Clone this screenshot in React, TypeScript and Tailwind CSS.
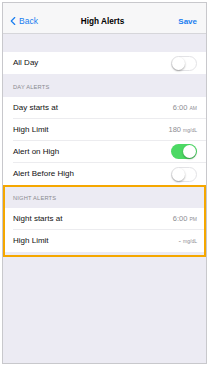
import { ChevronLeft } from 'lucide-react';

const font = { fontFamily: '"Liberation Sans", Arial, sans-serif' };

function Toggle({ on }: { on?: boolean }) {
    return (
        <div
            className={`relative w-[26px] h-[15px] rounded-full ${on ? 'bg-[#4cd964]' : 'bg-white border border-[#e3e3e6]'}`}
        >
            <div
                className={`absolute top-[0.5px] w-[13px] h-[13px] rounded-full bg-white shadow-[0_1px_2px_rgba(0,0,0,0.35)] ${on ? 'right-[1px]' : 'left-0'}`}
            />
        </div>
    );
}

function Row({ label, children, last }: { label: string; children: React.ReactNode; last?: boolean }) {
    return (
        <div className="h-[22px] bg-white pl-[10px]">
            <div className={`h-full flex items-center justify-between pr-[9px] ${last ? '' : 'border-b border-[#ececef]'}`}>
                <span className="text-[8px] text-[#111]">{label}</span>
                {children}
            </div>
        </div>
    );
}

function Value({ main, unit }: { main: string; unit: string }) {
    return (
        <span className="text-[7.5px] text-[#8e8e93]">
            {main} <span className="text-[5px] uppercase">{unit}</span>
        </span>
    );
}

function Header({ title }: { title: string }) {
    return (
        <div className="h-[23px] flex items-end pl-[10px] pb-[5px]">
            <span className="text-[5.7px] text-[#8a8a8f] tracking-[0.2px]">{title}</span>
        </div>
    );
}

export default function App() {
    return (
        <div className="w-[209px] h-[366px] bg-white pt-[2px] pl-[2px]" style={font}>
            <div className="w-[205px] h-[362px] border border-[#c8c8cc] bg-[#ecebf3] flex flex-col">
                {/* Nav bar */}
                <div className="h-[31px] bg-[#f7f7f8] border-b border-[#d6d6da] flex items-end pb-[5px] px-[5px]">
                    <div className="flex-1 flex items-center text-[#1a7ef0]">
                        <ChevronLeft className="w-[14px] h-[14px] -ml-[2px] -mr-[1px]" strokeWidth={2} />
                        <span className="text-[8.5px]">Back</span>
                    </div>
                    <span className="text-[8.2px] font-bold text-black">High Alerts</span>
                    <div className="flex-1 flex justify-end pr-[4px]">
                        <span className="text-[8px] font-bold text-[#1a7ef0]">Save</span>
                    </div>
                </div>

                <div className="h-[18px]" />

                <Row label="All Day" last>
                    <Toggle />
                </Row>

                <Header title="DAY ALERTS" />
                <Row label="Day starts at">
                    <Value main="6:00" unit="AM" />
                </Row>
                <Row label="High Limit">
                    <span className="text-[7.5px] text-[#8e8e93]">
                        180 <span className="text-[5px]">mg/dL</span>
                    </span>
                </Row>
                <Row label="Alert on High">
                    <Toggle on />
                </Row>
                <Row label="Alert Before High" last>
                    <Toggle />
                </Row>

                {/* Night section, highlighted */}
                <div className="relative pb-[5px]">
                    <Header title="NIGHT ALERTS" />
                    <Row label="Night starts at">
                        <Value main="6:00" unit="PM" />
                    </Row>
                    <Row label="High Limit" last>
                        <span className="text-[7.5px] text-[#8e8e93]">
                            - <span className="text-[5px]">mg/dL</span>
                        </span>
                    </Row>
                    <div className="absolute inset-0 border-2 border-[#f5a700] pointer-events-none" />
                </div>
            </div>
        </div>
    );
}
